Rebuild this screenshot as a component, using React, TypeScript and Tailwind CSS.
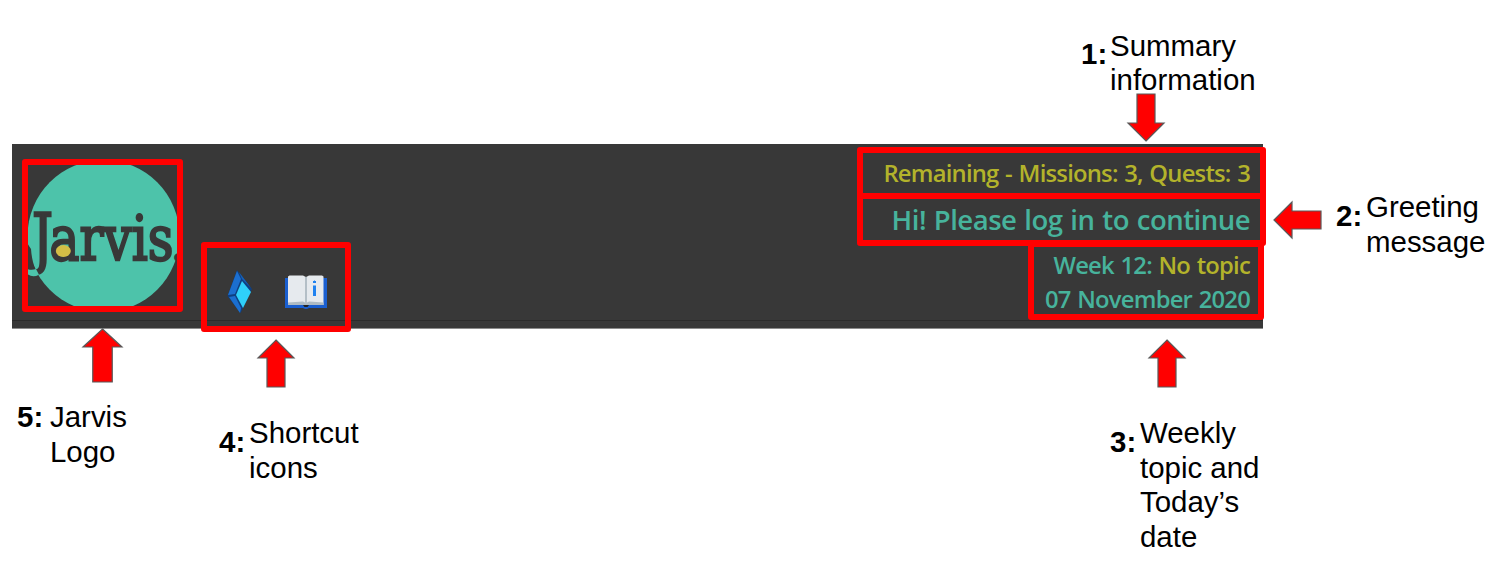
import type { ReactNode } from 'react';

type Dir = 'up' | 'down' | 'left';

function Arrow({ dir, w, h, className }: { dir: Dir; w: number; h: number; className: string }) {
  const head = 18;
  const pts =
    dir === 'left'
      ? [[0, h / 2], [head, 0], [head, h / 4], [w, h / 4], [w, (h * 3) / 4], [head, (h * 3) / 4], [head, h]]
      : [[w / 2, 0], [w, head], [(w * 3) / 4, head], [(w * 3) / 4, h], [w / 4, h], [w / 4, head], [0, head]].map(
          ([x, y]) => [x, dir === 'down' ? h - y : y],
        );
  return (
    <svg className={`absolute overflow-visible ${className}`} width={w} height={h}>
      <polygon points={pts.map((p) => p.join(',')).join(' ')} fill="#ff0000" stroke="#595959" strokeWidth="1.2" />
    </svg>
  );
}

function Label({ n, numClass, textClass, children }: { n: number; numClass: string; textClass: string; children: ReactNode }) {
  return (
    <>
      <p className={`absolute font-bold ${numClass}`}>{n}:</p>
      <p className={`absolute whitespace-nowrap ${textClass}`}>{children}</p>
    </>
  );
}

function Frame({ className }: { className: string }) {
  return <div className={`absolute rounded-[3px] border-[6px] border-[#ff0000] ${className}`} />;
}

function Logo() {
  return (
    <svg className="h-[156px] w-[172px] overflow-visible" viewBox="24 158 172 156">
      <circle cx="103.5" cy="236" r="76" fill="#4dc3aa" />
      <g fontFamily="DejaVu Serif" fill="#383838" stroke="#383838">
        <text x="32" y="260" fontSize="65" strokeWidth="2.4" textLength="21" lengthAdjust="spacingAndGlyphs">J</text>
        <text x="49.500" y="259.500" fontSize="61" strokeWidth="2.4" textLength="124" lengthAdjust="spacingAndGlyphs">arvis</text>
        <text x="171" y="259.500" fontSize="46" strokeWidth="2.4">.</text>
      </g>
      <ellipse cx="63.300" cy="251" rx="7.500" ry="6" fill="#d3bd46" />
      <path d="M27 243 L31 249 Q32 262 35.500 269 L28 270 Z" fill="#383838" />
      <path d="M28 269.300 Q32 270.500 36 269 L39 274.700 Q33 278 28 274.500 Z" fill="#4dc3aa" />
    </svg>
  );
}

function Gem() {
  return (
    <svg className="h-[44px] w-[26px]" viewBox="227 270 26 44">
      <path d="M237 270 L252 289 L240.500 313 L227.500 296 Z" fill="#0f3f80" />
      <path d="M237 271 L241 279 L235 294 L228 295 Z" fill="#1b6fd0" />
      <path d="M229 297 L235 296 L241 308 L240 313 Z" fill="#1b6fd0" />
      <path d="M239 272 L251 288 L242 279 Z" fill="#1560b8" />
      <path d="M242 281 L251 292 L243 308 L236 295 Z" fill="#2fd0fa" />
    </svg>
  );
}

function Book() {
  return (
    <svg className="mt-1 h-[36px] w-[42px]" viewBox="285 274 42 36">
      <path d="M285 278h42v30h-18q-3 2-6 0h-18z" fill="#1a5fd0" />
      <path d="M288 276.500L289.500 275.500H303L306 277L309 275.500H322L323.500 276.500V305H288z" fill="#e6eaee" />
      <path d="M288 302.500l15-1 3 1.500 3-1.500 14.500 1V305H288z" fill="#aebbc4" />
      <path d="M306 277v27" stroke="#b4bfc7" strokeWidth="2" />
      <path d="M303 305h6l-1.500 2h-3z" fill="#222" />
      <path d="M313 281h1l.500-1 .500 1h1v2h-3zM313 285.500h3v10.500h-3z" fill="#1f82f0" />
    </svg>
  );
}

export default function App() {
  return (
    <main className="relative h-[566px] w-[1498px] overflow-hidden bg-white pt-[144px] pl-3 font-['Liberation_Sans',sans-serif] text-[29.45px] leading-[34.6px] text-black">
      <header className="flex h-[185px] w-[1251px] border-b border-[#8c8c8c] bg-[#383838]">
        <div className="flex h-[177px] w-full justify-between border-b border-[#2b2b2b] pl-3">
          <div className="flex gap-[31px] pt-[14px]">
            <Logo />
            <div className="flex items-start gap-8 pt-[112px]">
              <Gem />
              <Book />
            </div>
          </div>
          <div className="flex flex-col items-end pt-[12px] pr-[13px] font-['Open_Sans',sans-serif] text-[23.8px] leading-[34px] font-semibold tracking-[-0.78px] [word-spacing:1.2px] whitespace-nowrap text-[#47b39c]">
            <p className="text-[#b3b32b]">Remaining - Missions: 3, Quests: 3</p>
            <p className="mt-[8px] text-[27.5px] leading-[44px] tracking-[-0.5px]">Hi! Please log in to continue</p>
            <p className="mt-[6px]">Week 12: <span className="text-[#b3b32b]">No topic</span></p>
            <p>07 November 2020</p>
          </div>
        </div>
      </header>

      <Frame className="top-[159px] left-[22px] h-[153px] w-[161px]" />
      <Frame className="top-[242px] left-[201px] h-[90px] w-[150px]" />
      <Frame className="top-[147px] left-[857px] h-[52px] w-[409px]" />
      <Frame className="top-[193px] left-[857px] h-[53px] w-[409px]" />
      <Frame className="top-[241px] left-[1028px] h-[79px] w-[236px]" />

      <Arrow dir="down" w={36} h={47} className="top-[94px] left-[1128px]" />
      <Arrow dir="left" w={47} h={36} className="top-[202px] left-[1274px]" />
      <Arrow dir="up" w={36} h={47} className="top-[340px] left-[1149px]" />
      <Arrow dir="up" w={36} h={47} className="top-[340px] left-[258px]" />
      <Arrow dir="up" w={39} h={53} className="top-[329px] left-[83px]" />

      <Label n={1} numClass="top-[37px] left-[1081px]" textClass="top-[29px] left-[1110px] leading-[34px]">Summary<br />information</Label>
      <Label n={2} numClass="top-[199px] left-[1336px]" textClass="top-[190px] left-[1366px]">Greeting<br />message</Label>
      <Label n={3} numClass="top-[425px] left-[1110px]" textClass="top-[416px] left-[1140px]">Weekly<br />topic and<br />Today’s<br />date</Label>
      <Label n={4} numClass="top-[425px] left-[219px]" textClass="top-[416px] left-[249px]">Shortcut<br />icons</Label>
      <Label n={5} numClass="top-[400px] left-[17px]" textClass="top-[400px] left-[50px]">Jarvis<br />Logo</Label>
    </main>
  );
}
